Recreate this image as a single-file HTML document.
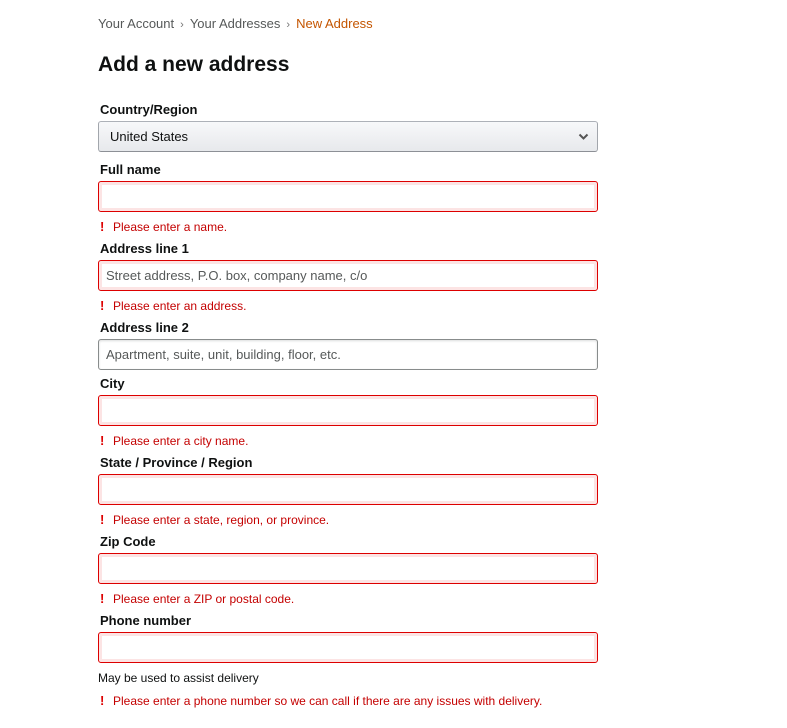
<!DOCTYPE html>
<html><head><meta charset="utf-8"><style>
*{margin:0;padding:0;box-sizing:border-box}
body{width:787px;height:728px;background:#fff;font-family:"Liberation Sans",Arial,sans-serif;color:#111;position:relative;overflow:hidden}
.a{position:absolute;white-space:nowrap}
.bc{left:98px;top:16px;font-size:13px;line-height:16px;color:#565959}
.bc .sep{color:#767676;margin:0 6px;font-size:11px}
.bc .cur{color:#c45500}
h1{position:absolute;left:98px;top:52px;font-size:21px;line-height:26px;font-weight:bold;color:#0f1111}
.lbl{left:100px;font-size:13px;font-weight:bold;line-height:16px;color:#0f1111}
.in{position:absolute;left:98px;width:500px;height:31px;border:1px solid #888c8c;border-radius:3px;background:#fff;font-size:13px;color:#565959;padding-left:7px;line-height:30px;box-shadow:0 1px 2px rgba(15,17,17,.15) inset}
.err{border:1px solid #d00;box-shadow:0 0 0 1px #fce4e4 inset,0 0 0 3px #fce4e4 inset}
.sel{background:linear-gradient(#f7f8fa,#e7e9ec);border-color:#adb1b8 #a2a6ac #8d9096;box-shadow:none;color:#0f1111;padding-left:11px}
.msg{left:100px;font-size:12px;line-height:14px;color:#c40000}
.msg b{display:inline-block;width:13px;color:#d00;font-weight:bold;font-size:13px}
.note{left:98px;font-size:12px;line-height:14px;color:#0f1111}
</style></head><body>
<div class="a bc">Your Account<span class="sep">›</span>Your Addresses<span class="sep">›</span><span class="cur">New Address</span></div>
<h1>Add a new address</h1>

<div class="a lbl" style="top:102px">Country/Region</div>
<div class="in sel" style="top:121px">United States
<svg style="position:absolute;right:8px;top:11px" width="11" height="8" viewBox="0 0 11 8"><path d="M1.5 1.5L5.5 5.5L9.5 1.5" stroke="#555" stroke-width="2" fill="none"/></svg></div>

<div class="a lbl" style="top:162px">Full name</div>
<div class="in err" style="top:181px"></div>
<div class="a msg" style="top:220px"><b>!</b>Please enter a name.</div>

<div class="a lbl" style="top:241px">Address line 1</div>
<div class="in err" style="top:260px">Street address, P.O. box, company name, c/o</div>
<div class="a msg" style="top:299px"><b>!</b>Please enter an address.</div>

<div class="a lbl" style="top:320px">Address line 2</div>
<div class="in" style="top:339px">Apartment, suite, unit, building, floor, etc.</div>

<div class="a lbl" style="top:376px">City</div>
<div class="in err" style="top:395px"></div>
<div class="a msg" style="top:434px"><b>!</b>Please enter a city name.</div>

<div class="a lbl" style="top:455px">State / Province / Region</div>
<div class="in err" style="top:474px"></div>
<div class="a msg" style="top:513px"><b>!</b>Please enter a state, region, or province.</div>

<div class="a lbl" style="top:534px">Zip Code</div>
<div class="in err" style="top:553px"></div>
<div class="a msg" style="top:592px"><b>!</b>Please enter a ZIP or postal code.</div>

<div class="a lbl" style="top:613px">Phone number</div>
<div class="in err" style="top:632px"></div>
<div class="a note" style="top:671px">May be used to assist delivery</div>
<div class="a msg" style="top:694px"><b>!</b>Please enter a phone number so we can call if there are any issues with delivery.</div>
</body></html>
